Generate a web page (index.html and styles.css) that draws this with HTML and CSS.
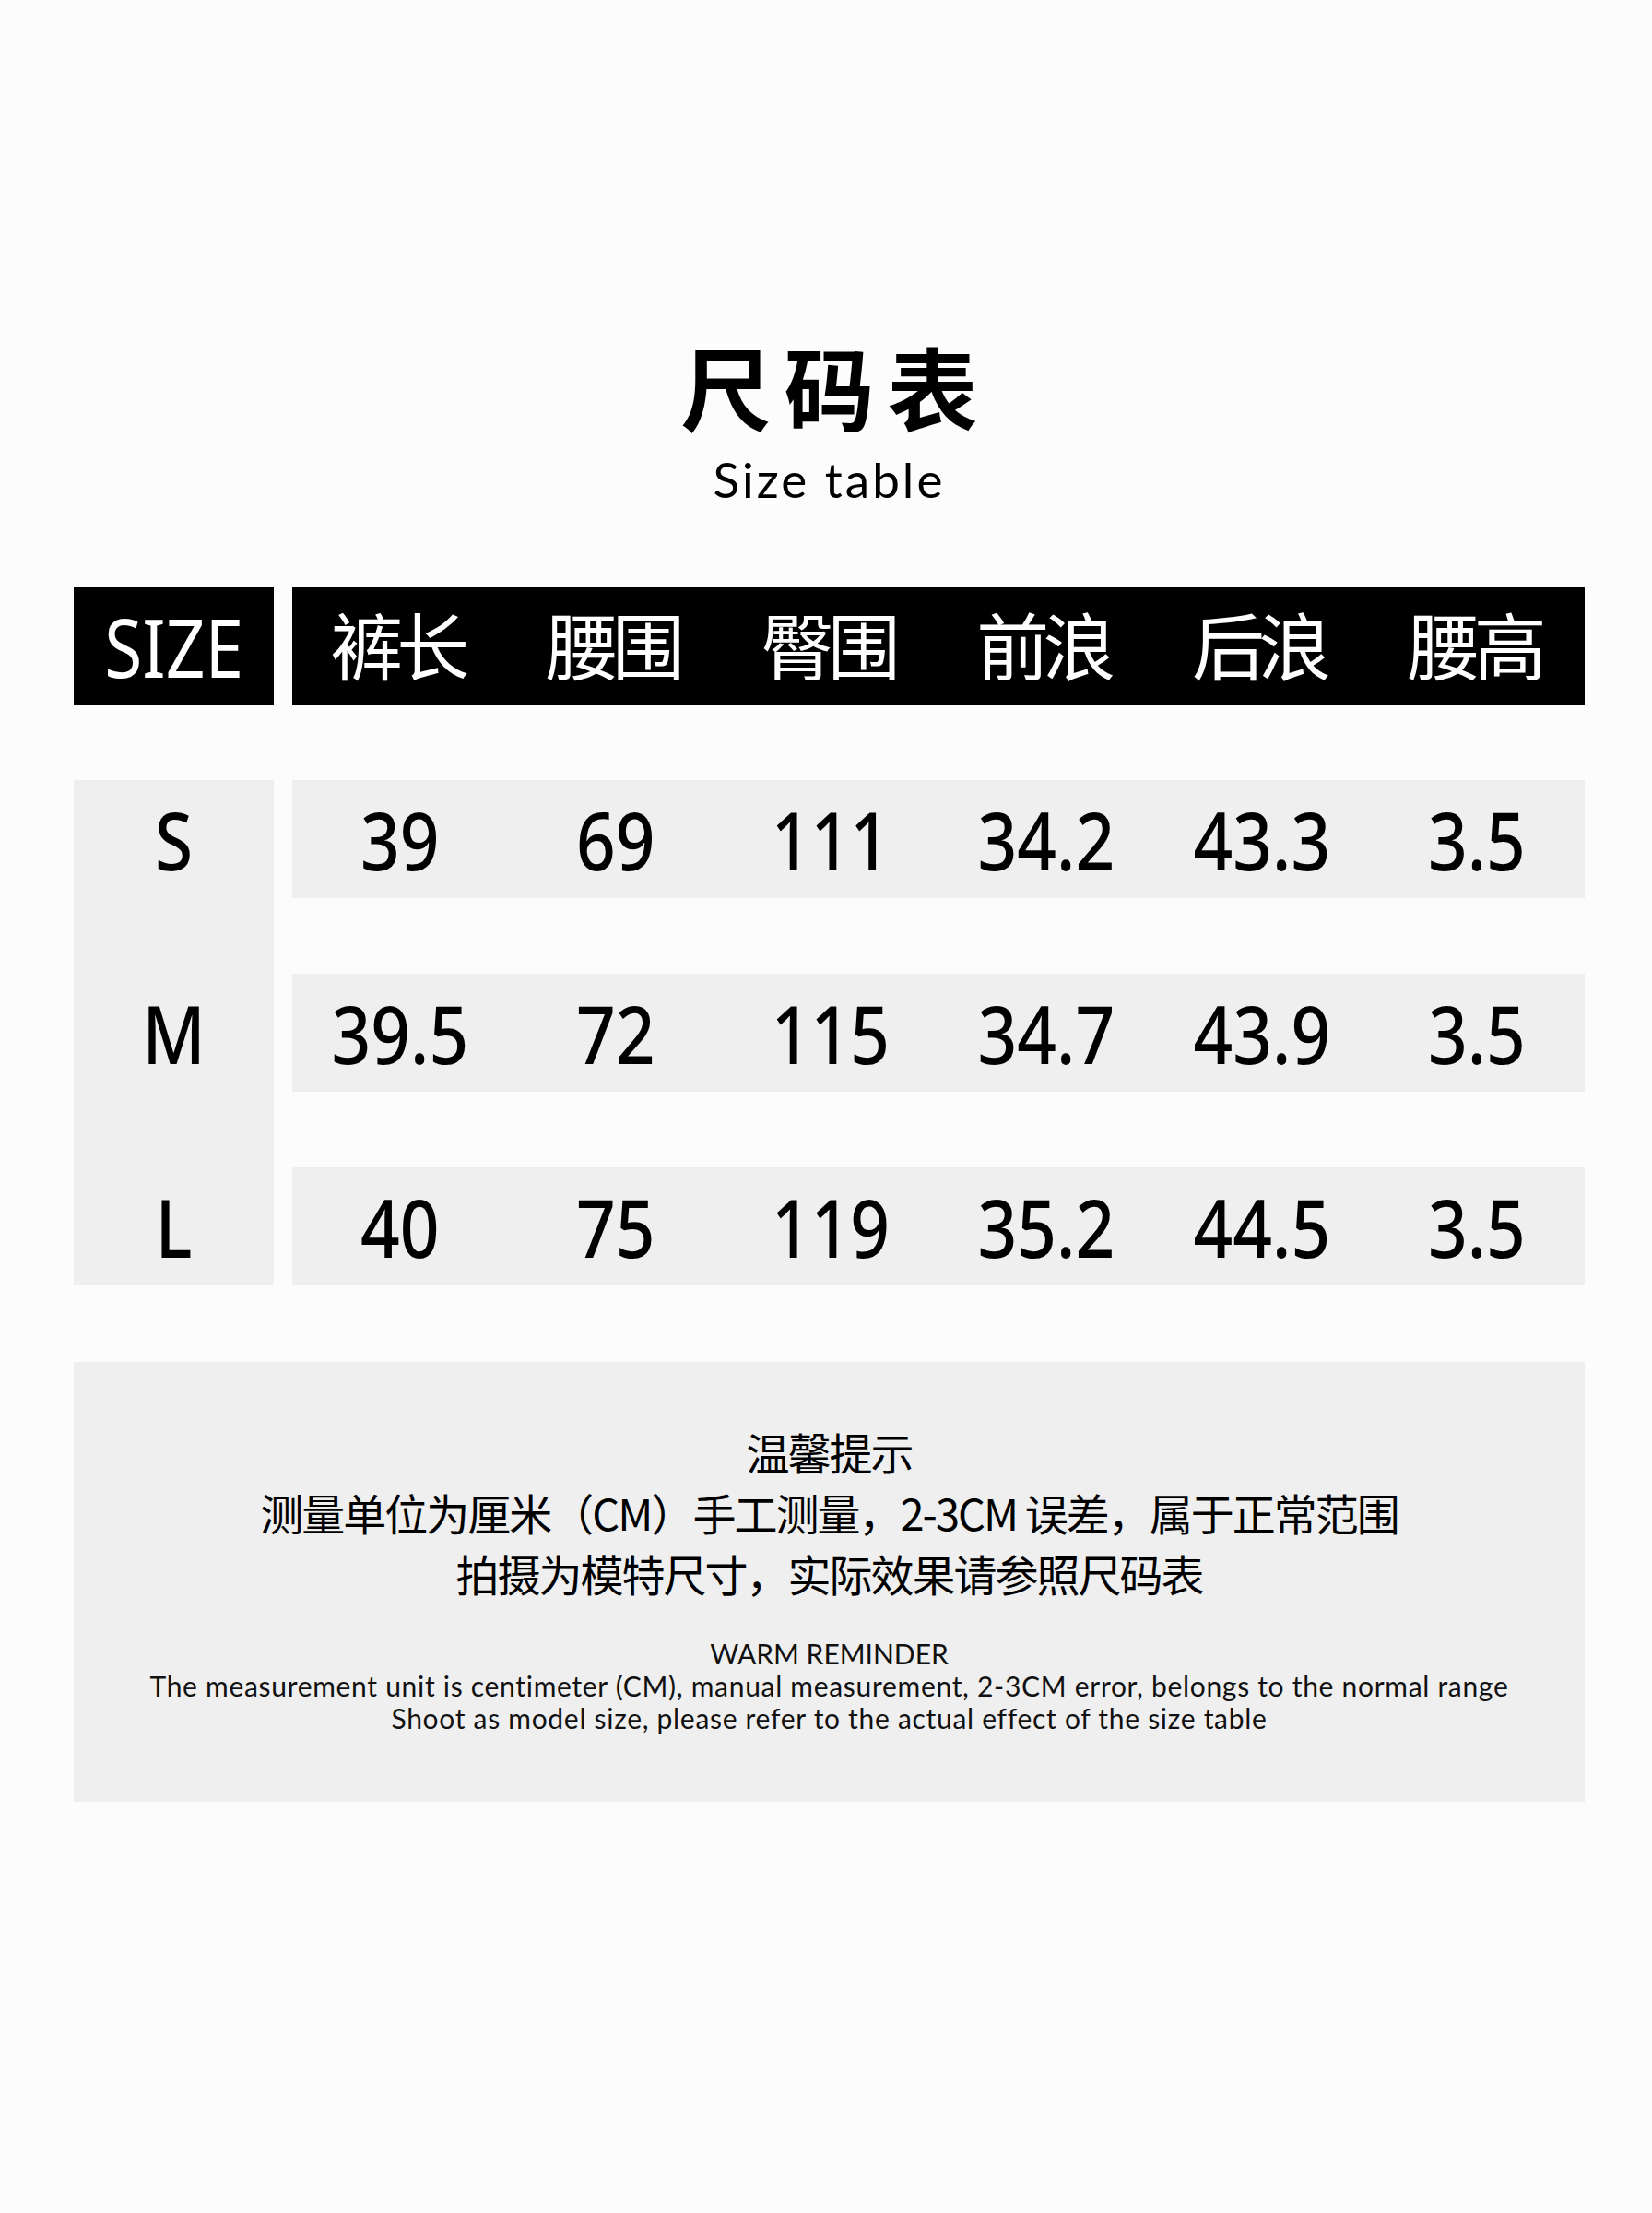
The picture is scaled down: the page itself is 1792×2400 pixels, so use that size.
FILE: index.html
```html
<!DOCTYPE html>
<html lang="zh-CN">
<head>
<meta charset="utf-8">
<title>尺码表 Size table</title>
<link rel="stylesheet" href="styles.css">
</head>
<body>
<div class="page">
  <h1 class="title">尺码表</h1>
  <p class="subtitle">Size table</p>

  <div class="table">
    <div class="head-size"><span class="narrow">SIZE</span></div>
    <div class="head-cols">
      <div class="hcell">裤长</div>
      <div class="hcell">腰围</div>
      <div class="hcell">臀围</div>
      <div class="hcell">前浪</div>
      <div class="hcell">后浪</div>
      <div class="hcell">腰高</div>
    </div>

    <div class="size-col">
      <div class="scell">S</div>
      <div class="scell">M</div>
      <div class="scell">L</div>
    </div>
    <div class="rows">
      <div class="row">
        <div class="cell">39</div><div class="cell">69</div><div class="cell">111</div><div class="cell">34.2</div><div class="cell">43.3</div><div class="cell">3.5</div>
      </div>
      <div class="row">
        <div class="cell">39.5</div><div class="cell">72</div><div class="cell">115</div><div class="cell">34.7</div><div class="cell">43.9</div><div class="cell">3.5</div>
      </div>
      <div class="row">
        <div class="cell">40</div><div class="cell">75</div><div class="cell">119</div><div class="cell">35.2</div><div class="cell">44.5</div><div class="cell">3.5</div>
      </div>
    </div>
  </div>

  <div class="notes">
    <div class="cn">
      <p>温馨提示</p>
      <p>测量单位为厘米（CM）手工测量，2-3CM 误差，属于正常范围</p>
      <p>拍摄为模特尺寸，实际效果请参照尺码表</p>
    </div>
    <div class="en">
      <p class="en-title">WARM REMINDER</p>
      <p>The measurement unit is centimeter (CM), manual measurement, 2-3CM error, belongs to the normal range</p>
      <p>Shoot as model size, please refer to the actual effect of the size table</p>
    </div>
  </div>
</div>
</body>
</html>
```

FILE: styles.css
```css
html, body {
  margin: 0;
  padding: 0;
  background: #fcfcfc;
}

.page {
  width: 1792px;
  height: 2400px;
  box-sizing: border-box;
  padding: 367px 73px 0 80px;
  color: #000;
}

.title {
  margin: 0;
  font-family: "Noto Sans CJK SC", sans-serif;
  font-weight: 700;
  font-size: 98px;
  line-height: 100px;
  letter-spacing: 14px;
  padding-left: 14px;
  text-align: center;
}

.subtitle {
  margin: 23px 0 0;
  font-family: Lato, "Noto Sans", sans-serif;
  font-weight: 400;
  font-size: 53px;
  line-height: 60px;
  letter-spacing: 3px;
  text-align: center;
}

.table {
  margin-top: 87px;
  display: grid;
  grid-template-columns: 217px 1402px;
  column-gap: 20px;
  row-gap: 81px;
}

.head-size,
.head-cols {
  background: #000;
  color: #fff;
  height: 128px;
}

.head-size {
  display: flex;
  align-items: center;
  justify-content: center;
  font-family: "Noto Sans", "DejaVu Sans", sans-serif;
  font-weight: 400;
  font-size: 88px;
}

.narrow {
  display: inline-block;
  transform: scaleX(0.85);
}

.head-cols {
  display: grid;
  grid-template-columns: repeat(6, 1fr);
}

.hcell {
  display: flex;
  align-items: center;
  justify-content: center;
  font-family: "Noto Sans CJK SC", sans-serif;
  font-weight: 400;
  font-size: 79px;
  letter-spacing: -7px;
  padding-bottom: 8px;
  padding-right: 7px;
  box-sizing: border-box;
}

.size-col {
  background: #efefef;
  display: flex;
  flex-direction: column;
  gap: 82px;
}

.rows {
  display: flex;
  flex-direction: column;
  gap: 82px;
}

.row {
  background: #efefef;
  height: 128px;
  display: grid;
  grid-template-columns: repeat(6, 1fr);
}

.scell,
.cell {
  height: 128px;
  display: flex;
  align-items: center;
  justify-content: center;
  font-family: "Noto Sans", "DejaVu Sans", sans-serif;
  font-weight: 500;
  font-size: 88px;
  transform: scaleX(0.85);
}

.notes {
  margin-top: 83px;
  width: 1639px;
  height: 477px;
  box-sizing: border-box;
  background: #efefef;
  padding-top: 64px;
  text-align: center;
}

.notes p {
  margin: 0;
}

.cn {
  font-family: "Noto Sans CJK SC", sans-serif;
  font-size: 47px;
  line-height: 66px;
  letter-spacing: -2px;
}

.en {
  margin-top: 37px;
  font-family: Lato, "Noto Sans", sans-serif;
  font-size: 30px;
  line-height: 35px;
  letter-spacing: 0.7px;
  color: #111;
}

.en .en-title {
  letter-spacing: 0;
}
```
